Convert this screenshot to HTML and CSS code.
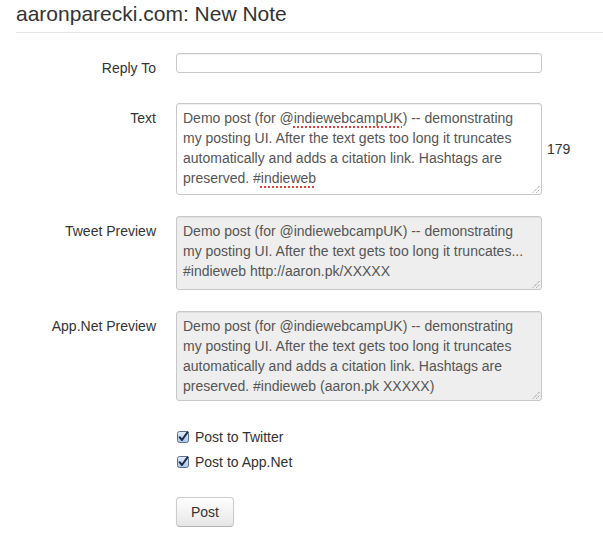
FILE: index.html
```html
<!DOCTYPE html>
<html>
<head>
<meta charset="utf-8">
<title>New Note</title>
<link rel="stylesheet" href="styles.css">
</head>
<body>
<div class="page">
  <h1 class="title">aaronparecki.com: New Note</h1>
  <hr class="rule">
  <form class="form">
    <div class="row row-reply">
      <label class="label">Reply To</label>
      <input class="input" type="text">
    </div>
    <div class="row row-text">
      <label class="label">Text</label>
      <div class="textarea ta-text">
        <div class="line">Demo post (for @<span class="spell">indiewebcampUK</span>) -- demonstrating</div>
        <div class="line">my posting UI. After the text gets too long it truncates</div>
        <div class="line">automatically and adds a citation link. Hashtags are</div>
        <div class="line">preserved. #<span class="spell">indieweb</span></div>
        <svg class="grip" width="8" height="8" viewBox="0 0 8 8"><path d="M1 7.5 L7.5 1 M4.5 7.5 L7.5 4.5" stroke="#777" stroke-width="1" stroke-dasharray="1 1" fill="none"/></svg>
      </div>
      <div class="count">179</div>
    </div>
    <div class="row row-tweet">
      <label class="label">Tweet Preview</label>
      <div class="textarea readonly ta-tweet">
        <div class="line">Demo post (for @indiewebcampUK) -- demonstrating</div>
        <div class="line">my posting UI. After the text gets too long it truncates...</div>
        <div class="line">#indieweb http://aaron.pk/XXXXX</div>
        <svg class="grip" width="8" height="8" viewBox="0 0 8 8"><path d="M1 7.5 L7.5 1 M4.5 7.5 L7.5 4.5" stroke="#777" stroke-width="1" stroke-dasharray="1 1" fill="none"/></svg>
      </div>
    </div>
    <div class="row row-app">
      <label class="label">App.Net Preview</label>
      <div class="textarea readonly ta-app">
        <div class="line">Demo post (for @indiewebcampUK) -- demonstrating</div>
        <div class="line">my posting UI. After the text gets too long it truncates</div>
        <div class="line">automatically and adds a citation link. Hashtags are</div>
        <div class="line">preserved. #indieweb (aaron.pk XXXXX)</div>
        <svg class="grip" width="8" height="8" viewBox="0 0 8 8"><path d="M1 7.5 L7.5 1 M4.5 7.5 L7.5 4.5" stroke="#777" stroke-width="1" stroke-dasharray="1 1" fill="none"/></svg>
      </div>
    </div>
    <div class="checks">
      <label class="check">
        <svg class="box" width="12" height="12" viewBox="0 0 12 12">
          <defs><linearGradient id="cb" x1="0" y1="0" x2="0" y2="1"><stop offset="0" stop-color="#e4eefb"/><stop offset="1" stop-color="#a9c6ec"/></linearGradient></defs>
          <rect x="0.5" y="0.5" width="11" height="11" rx="2" fill="url(#cb)" stroke="#5c6f8c"/>
          <path d="M2.6 6.2 L5 9 L10.6 1.2" stroke="#1d2b48" stroke-width="2" fill="none" stroke-linecap="round" stroke-linejoin="round"/>
        </svg>
        <span>Post to Twitter</span>
      </label>
      <label class="check">
        <svg class="box" width="12" height="12" viewBox="0 0 12 12">
          <rect x="0.5" y="0.5" width="11" height="11" rx="2" fill="url(#cb)" stroke="#5c6f8c"/>
          <path d="M2.6 6.2 L5 9 L10.6 1.2" stroke="#1d2b48" stroke-width="2" fill="none" stroke-linecap="round" stroke-linejoin="round"/>
        </svg>
        <span>Post to App.Net</span>
      </label>
    </div>
    <div class="actions">
      <button class="btn" type="button">Post</button>
    </div>
  </form>
</div>
</body>
</html>
```

FILE: styles.css
```css
html, body {
  margin: 0;
  padding: 0;
  background: #fff;
}
body {
  font-family: "Liberation Sans", Helvetica, Arial, sans-serif;
  font-size: 14px;
  line-height: 20px;
  color: #333;
}
.page {
  padding-left: 16px;
}
.title {
  margin: 1px 0 0 0;
  font-size: 21px;
  line-height: 26px;
  font-weight: normal;
  color: #333;
}
.rule {
  margin: 5px 0 0 0;
  border: 0;
  border-top: 1px solid #e5e5e5;
  height: 0;
}
.form {
  margin: 0;
  padding-top: 20px;
}
.row {
  display: flex;
  align-items: flex-start;
}
.label {
  width: 140px;
  margin-right: 20px;
  padding-top: 5px;
  text-align: right;
  flex: none;
}
.input {
  box-sizing: border-box;
  width: 366px;
  height: 20px;
  margin: 0;
  padding: 0 6px;
  border: 1px solid #c8c8c8;
  border-radius: 3px;
  box-shadow: inset 0 1px 1px rgba(0,0,0,0.06);
  background: #fff;
  font: inherit;
}
.row-reply {
  margin-bottom: 25px;
}
.row-text, .row-tweet {
  margin-bottom: 21px;
}
.textarea {
  position: relative;
  box-sizing: border-box;
  width: 366px;
  padding: 4px 6px;
  border: 1px solid #c8c8c8;
  border-radius: 3px;
  box-shadow: inset 0 1px 1px rgba(0,0,0,0.06);
  background: #fff;
  color: #555;
  white-space: nowrap;
  flex: none;
}
.readonly {
  background: #eee;
}
.ta-text {
  height: 92px;
}
.ta-tweet {
  height: 74px;
}
.ta-app {
  height: 90px;
}
.spell {
  text-decoration: underline dotted #e0403a;
  text-decoration-thickness: 2px;
  text-underline-offset: 3px;
}
.grip {
  position: absolute;
  right: 1px;
  bottom: 1px;
}
.count {
  align-self: center;
  margin-left: 5px;
  color: #333;
}
.checks {
  margin-top: 26px;
  padding-left: 160px;
}
.check {
  display: flex;
  align-items: center;
  height: 20px;
  margin-bottom: 5px;
}
.box {
  margin-left: 1px;
  margin-right: 6px;
  flex: none;
}
.actions {
  padding-left: 160px;
  margin-top: 25px;
}
.btn {
  box-sizing: border-box;
  height: 30px;
  padding: 0 14px;
  margin: 0;
  font: inherit;
  color: #333;
  background: linear-gradient(#ffffff, #e6e6e6);
  border: 1px solid #ccc;
  border-bottom-color: #b3b3b3;
  border-radius: 4px;
  box-shadow: inset 0 1px 0 rgba(255,255,255,0.2), 0 1px 2px rgba(0,0,0,0.05);
}
```
